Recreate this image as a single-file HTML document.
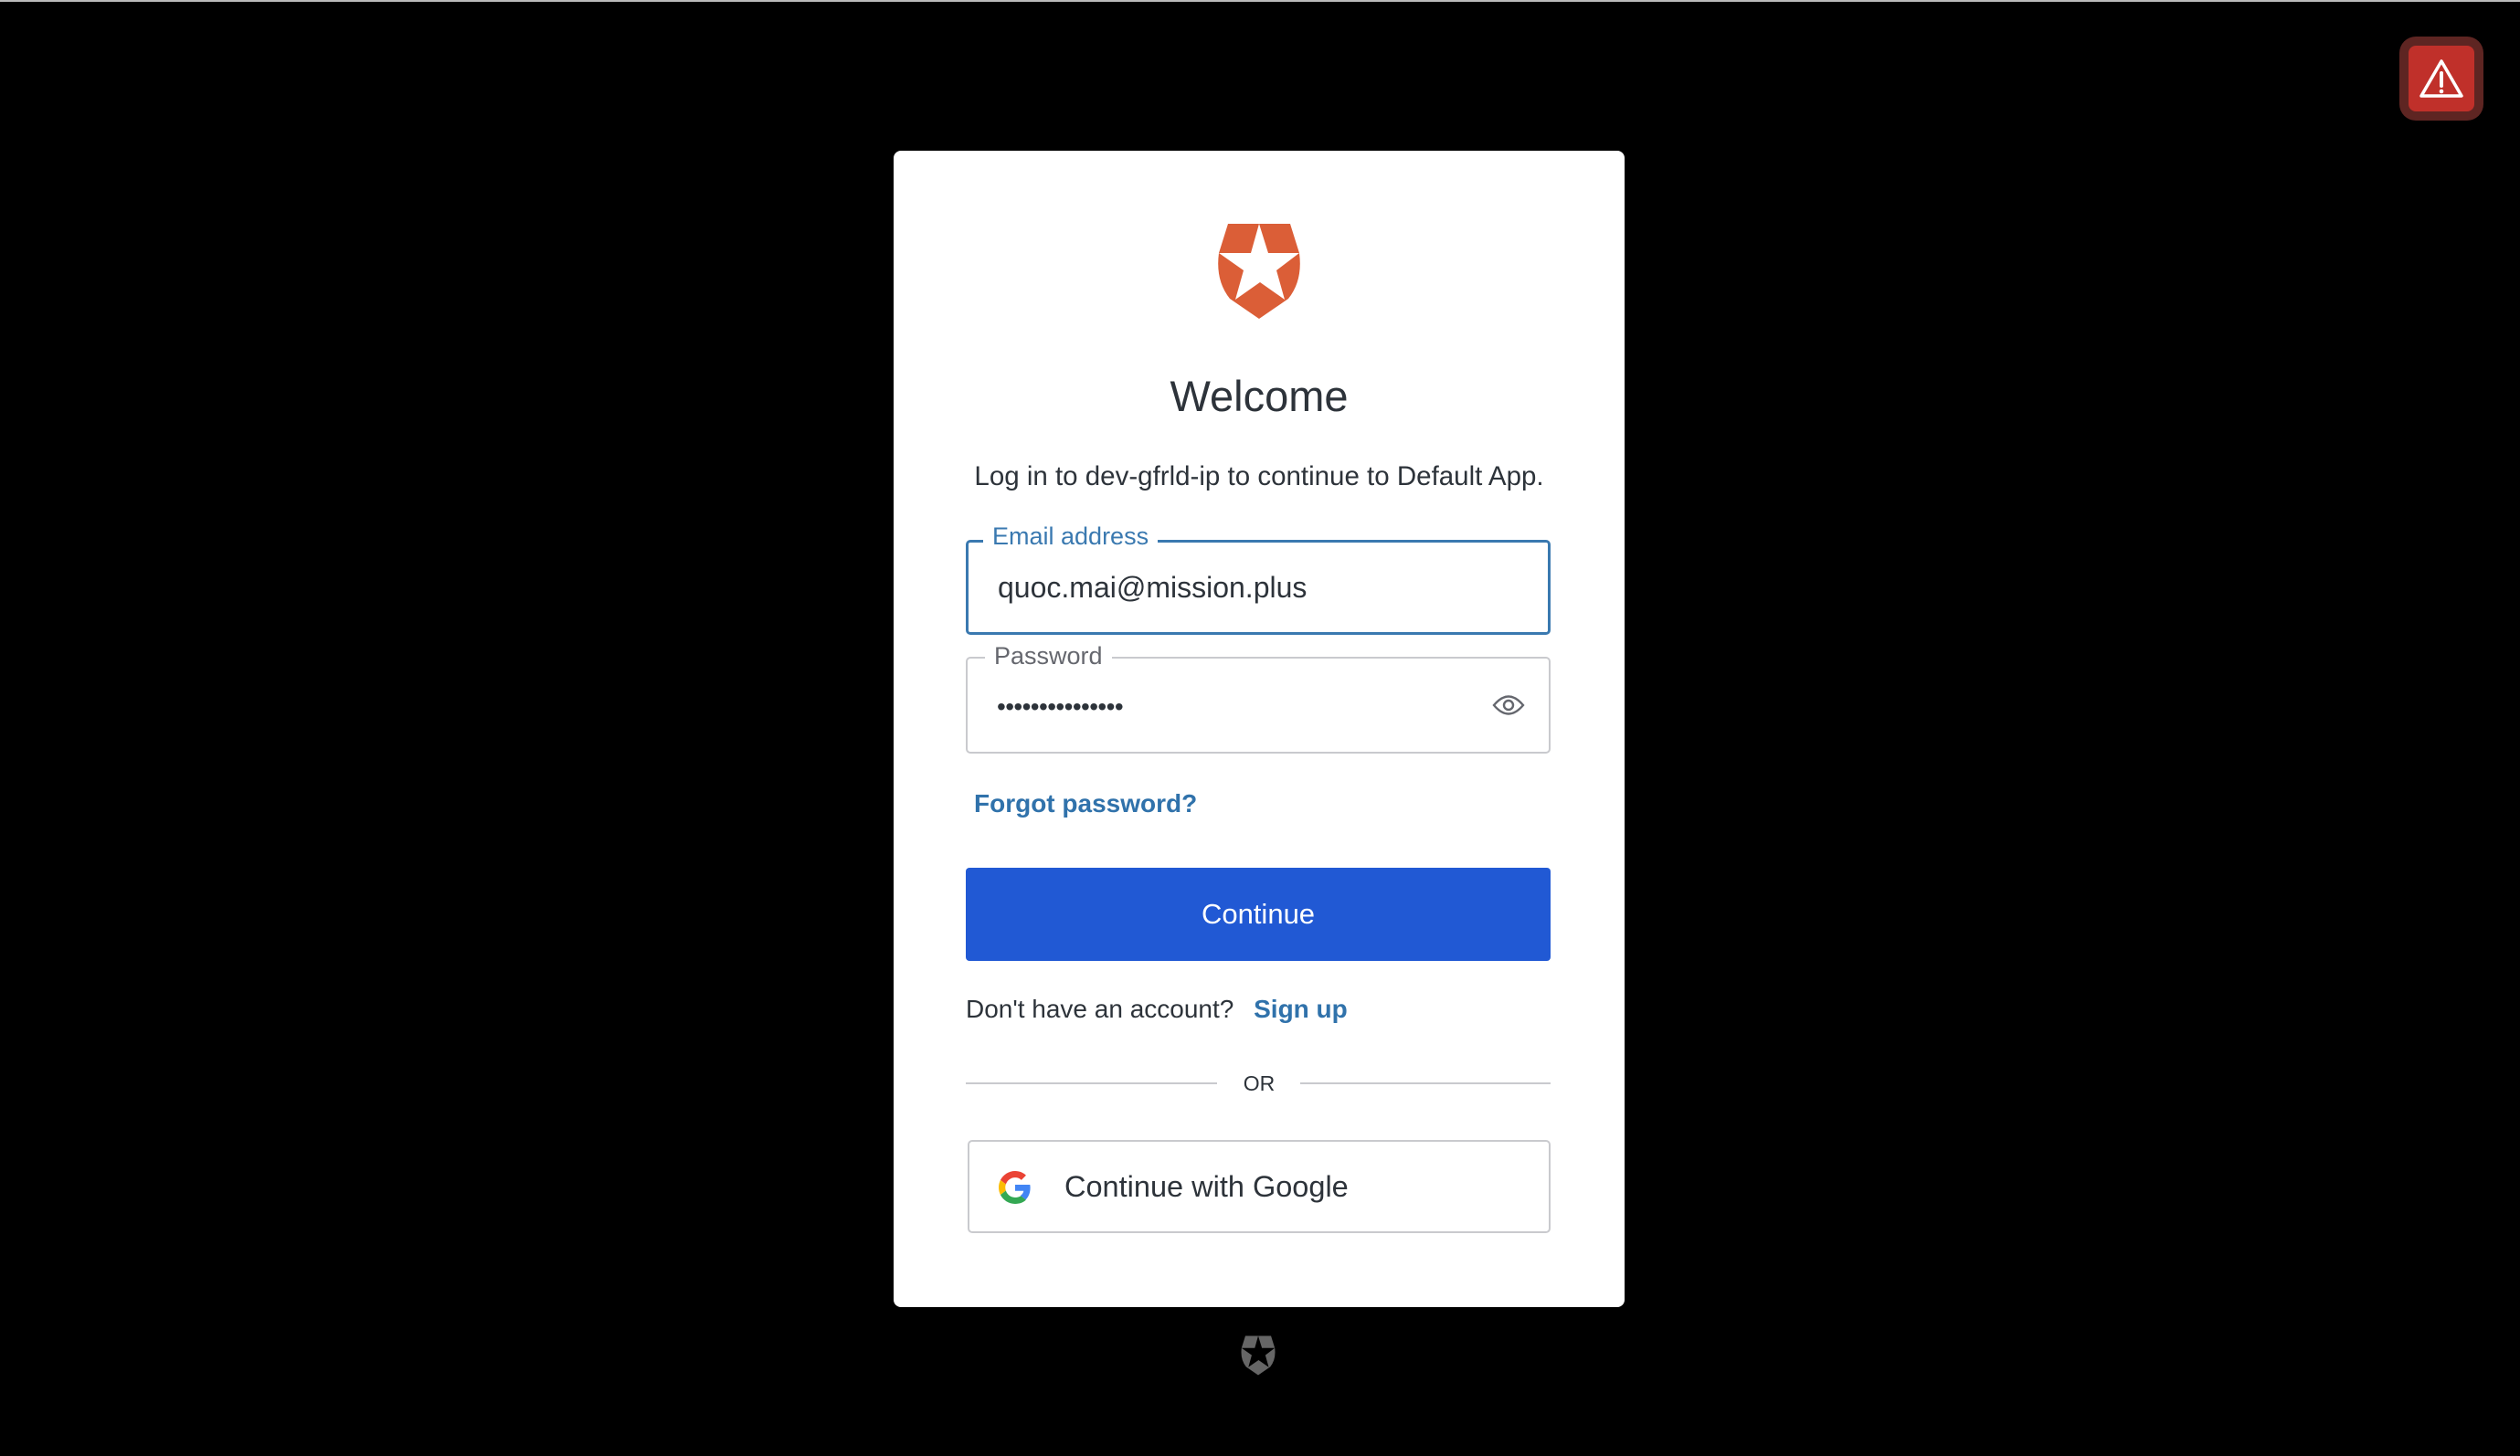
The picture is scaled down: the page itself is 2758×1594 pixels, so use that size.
<!DOCTYPE html>
<html><head><meta charset="utf-8"><style>
*{box-sizing:border-box;margin:0;padding:0}
body{width:2758px;height:1594px;background:#000;position:relative;overflow:hidden;font-family:"Liberation Sans",sans-serif;color:#2d333a}
.top{position:absolute;left:0;top:0;width:2758px;height:2px;background:#bbb}
.card{position:absolute;left:978px;top:165px;width:800px;height:1266px;background:#fff;border-radius:8px}
.abs{position:absolute}
.c{left:0;width:800px;text-align:center}
.field{position:absolute;left:79px;width:640px;border-radius:5px}
.lbl{position:absolute;top:-17px;background:#fff;padding:0 10px;font-size:27px}
.warn{position:absolute;left:2626px;top:40px;width:92px;height:92px;background:#5e2522;border-radius:18px}
.warn div{position:absolute;left:10px;top:10px;width:72px;height:72px;background:#c0302a;border-radius:8px}
</style></head><body>
<div class="top"></div>
<div class="warn"><div><svg width="72" height="72" viewBox="0 0 72 72"><path d="M36 17 L58 55 H14 Z" fill="none" stroke="#fff" stroke-width="3.5" stroke-linejoin="round"/><line x1="36" y1="30" x2="36" y2="44" stroke="#fff" stroke-width="4" stroke-linecap="round"/><circle cx="36" cy="50" r="2.3" fill="#fff"/></svg></div></div>
<div class="card">
 <svg class="abs" style="left:354px;top:80px" width="92" height="104" viewBox="0 0 92 104"><path d="M12 0 H80 L90 32 Q94 62 78 82 L46 104 L14 82 Q-2 62 2 32 Z" fill="#db5e37"/><path d="M46 0 L56 32 L90 32 L65 51 L74 83 L47 64 L20 83 L29 51 L2 32 L37 32 Z" fill="#fff"/></svg>
 <div class="abs c" style="top:241px;font-size:47px">Welcome</div>
 <div class="abs c" style="top:340px;font-size:29.5px">Log in to dev-gfrld-ip to continue to Default App.</div>
 <div class="field" style="top:426px;height:104px;border:3px solid #3a79b0">
  <div class="lbl" style="left:16px;color:#3a79b0;top:-22px">Email address</div>
  <div class="abs" style="left:32px;top:31px;font-size:32px">quoc.mai@mission.plus</div>
 </div>
 <div class="field" style="top:554px;height:106px;border:2px solid #c9cace">
  <div class="lbl" style="left:19px;color:#65676e;top:-18px">Password</div>
  <div class="abs" style="left:32px;top:37px;font-size:28px;letter-spacing:-0.6px">•••••••••••••••</div>
  <svg class="abs" style="left:574px;top:38px" width="36" height="26" viewBox="0 0 36 26"><path d="M2 13 Q18 -6 34 13 Q18 32 2 13 Z" fill="none" stroke="#65676e" stroke-width="2.4"/><circle cx="18" cy="13" r="5" fill="none" stroke="#65676e" stroke-width="2.4"/></svg>
 </div>
 <div class="abs" style="left:88px;top:699px;font-size:28px;font-weight:bold;color:#3072ab">Forgot password?</div>
 <div class="abs" style="left:79px;top:785px;width:640px;height:102px;background:#2159d4;border-radius:4px;color:#fff;font-size:31px;text-align:center;line-height:102px">Continue</div>
 <div class="abs" style="left:79px;top:924px;font-size:28px">Don't have an account? <b style="color:#3072ab;margin-left:14px">Sign up</b></div>
 <div class="abs" style="left:79px;top:1020px;width:275px;height:2px;background:#c9cace"></div>
 <div class="abs" style="left:445px;top:1020px;width:274px;height:2px;background:#c9cace"></div>
 <div class="abs c" style="top:1008px;font-size:23px">OR</div>
 <div class="field" style="top:1083px;height:102px;border:2px solid #c9cace;left:81px;width:638px">
  <svg class="abs" style="left:32px;top:32px" width="36" height="36" viewBox="0 0 48 48"><path fill="#EA4335" d="M24 9.5c3.5 0 6.6 1.2 9.1 3.6l6.8-6.8C35.9 2.4 30.5 0 24 0 14.6 0 6.6 5.4 2.6 13.2l7.9 6.2C12.4 13.6 17.7 9.5 24 9.5z"/><path fill="#4285F4" d="M46.1 24.5c0-1.6-.1-3.1-.4-4.5H24v9h12.4c-.5 2.9-2.2 5.4-4.7 7l7.6 5.9c4.4-4.1 6.8-10.1 6.8-17.4z"/><path fill="#FBBC05" d="M10.5 28.6c-.5-1.4-.8-3-.8-4.6s.3-3.2.8-4.6l-7.9-6.2C.9 16.5 0 20.1 0 24s.9 7.5 2.6 10.8l7.9-6.2z"/><path fill="#34A853" d="M24 48c6.5 0 11.9-2.1 15.9-5.8l-7.6-5.9c-2.1 1.4-4.9 2.3-8.3 2.3-6.3 0-11.6-4.1-13.5-9.9l-7.9 6.2C6.6 42.6 14.6 48 24 48z"/></svg>
  <div class="abs" style="left:104px;top:31px;font-size:32.5px">Continue with Google</div>
 </div>
</div>
<svg class="abs" style="left:1358px;top:1462px" width="38" height="44" viewBox="0 0 92 104"><path d="M12 0 H80 L90 32 Q94 62 78 82 L46 104 L14 82 Q-2 62 2 32 Z" fill="#666"/><path d="M46 0 L56 32 L90 32 L65 51 L74 83 L47 64 L20 83 L29 51 L2 32 L37 32 Z" fill="#000"/></svg>
</body></html>
